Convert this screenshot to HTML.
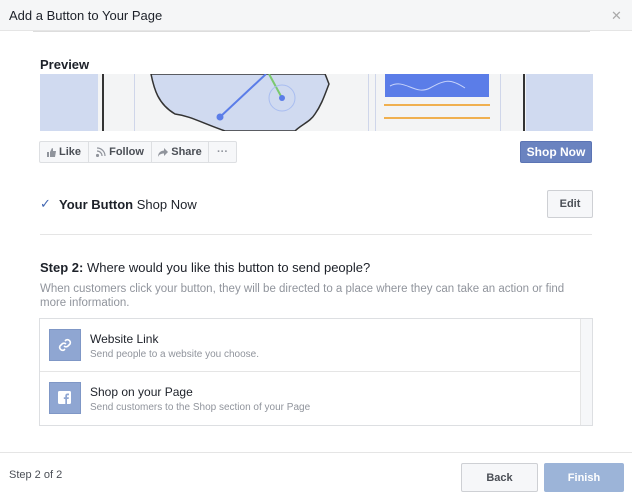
<!DOCTYPE html>
<html><head><meta charset="utf-8"><style>
*{margin:0;padding:0;box-sizing:border-box}
body{width:632px;height:500px;background:#fff;font-family:"Liberation Sans",sans-serif;position:relative;overflow:hidden;color:#1d2129}
.a{position:absolute}
.hdr{left:0;top:0;width:632px;height:31px;background:#f5f6f7;border-bottom:1px solid #e5e5e5}
.btn{border:1px solid #ced0d4;background:#f6f7f9;border-radius:2px;font-size:11px;font-weight:bold;color:#4b4f56;display:flex;align-items:center;justify-content:center}
</style></head><body>
<div class="a hdr"></div>
<div class="a" style="left:9px;top:8px;font-size:13px;color:#1d2129">Add a Button to Your Page</div>
<div class="a" style="left:611px;top:8px;font-size:13px;color:#aaa">✕</div>
<div class="a" style="left:33px;top:31px;width:557px;height:1px;background:#ddd"></div>
<div class="a" style="left:40px;top:57px;font-size:13px;font-weight:bold;color:#1d2129">Preview</div>
<svg class="a" style="left:40px;top:74px" width="553" height="57" viewBox="0 0 553 57">
<rect width="553" height="57" fill="#f3f4f5"/>
<rect width="58" height="57" fill="#d0daf0"/>
<rect x="486" width="67" height="57" fill="#d0daf0"/>
<rect x="62" width="2" height="57" fill="#333"/>
<rect x="483" width="2" height="57" fill="#333"/>
<rect x="94" width="1" height="57" fill="#cfd6ea"/>
<rect x="328" width="1" height="57" fill="#cfd6ea"/><rect x="335" width="1" height="57" fill="#cfd6ea"/>
<rect x="460" width="1" height="57" fill="#cfd6ea"/>
<path d="M111 0 C114 15 118 30 135 40 C150 42 160 48 185 57 L255 57 C262 50 270 48 275 40 C282 30 285 20 289 10 C287 5 286 2 285 0Z" fill="#d0daf0" stroke="#333" stroke-width="1.5"/>
<line x1="180" y1="43" x2="226" y2="0" stroke="#5b7de8" stroke-width="2"/>
<line x1="229" y1="0" x2="242" y2="24" stroke="#7bc96f" stroke-width="2"/>
<circle cx="242" cy="24" r="13" fill="none" stroke="#a9bdf0"/>
<circle cx="242" cy="24" r="3" fill="#5b7de8"/><circle cx="180" cy="43" r="3.5" fill="#5b7de8"/>
<rect x="345" width="104" height="23" fill="#5b7de8"/>
<path d="M350 12c15-8 25 10 40 2s20-10 35 0" stroke="#c8d4fa" fill="none"/>
<rect x="344" y="30" width="106" height="2" fill="#f0b050"/>
<rect x="344" y="43" width="106" height="2" fill="#f0b050"/>
</svg>
<div class="a" style="left:39px;top:141px;width:198px;height:22px;border:1px solid #dddfe2;border-radius:2px;background:#f6f7f9;display:flex;font-size:11px;font-weight:bold;color:#4b4f56">
<div style="width:49px;display:flex;align-items:center;justify-content:center;border-right:1px solid #dddfe2"><svg width="9" height="9" viewBox="0 0 9 9"><path d="M0 4h2v5H0zM3 4l2-4c1 0 1 1 1 2v1h3l-1 6H3z" fill="#90949c"/></svg>&nbsp;Like</div>
<div style="width:63px;display:flex;align-items:center;justify-content:center;border-right:1px solid #dddfe2"><svg width="10" height="10" viewBox="0 0 10 10" fill="none" stroke="#90949c" stroke-width="1.2"><path d="M1 1a8 8 0 0 1 8 8M1 4a5 5 0 0 1 5 5"/><circle cx="1.5" cy="8.5" r="1" fill="#90949c"/></svg>&nbsp;Follow</div>
<div style="width:57px;display:flex;align-items:center;justify-content:center;border-right:1px solid #dddfe2"><svg width="10" height="9" viewBox="0 0 10 9"><path d="M6 0l4 4-4 4V5.5C3 5.5 1 6.5 0 9c0-4 2-6 6-6.5z" fill="#90949c"/></svg>&nbsp;Share</div>
<div style="flex:1;display:flex;align-items:center;justify-content:center;color:#90949c">···</div>
</div>
<div class="a" style="left:520px;top:141px;width:72px;height:22px;background:#6a83c0;border:1px solid #5b74b4;border-radius:2px;color:#fff;font-size:12px;font-weight:bold;display:flex;align-items:center;justify-content:center">Shop Now</div>
<div class="a" style="left:40px;top:196px;font-size:13px;color:#4267b2">✓</div>
<div class="a" style="left:59px;top:197px;font-size:13px"><b>Your Button</b> Shop Now</div>
<div class="a btn" style="left:547px;top:190px;width:46px;height:28px">Edit</div>
<div class="a" style="left:40px;top:234px;width:552px;height:1px;background:#e5e5e5"></div>
<div class="a" style="left:40px;top:260px;font-size:13px"><b>Step 2:</b> Where would you like this button to send people?</div>
<div class="a" style="left:40px;top:282px;width:550px;font-size:11.5px;line-height:14px;color:#90949c">When customers click your button, they will be directed to a place where they can take an action or find more information.</div>
<div class="a" style="left:39px;top:318px;width:554px;height:108px;border:1px solid #dddfe2"></div>
<div class="a" style="left:580px;top:319px;width:12px;height:106px;background:#f6f7f9;border-left:1px solid #e5e5e5"></div>
<div class="a" style="left:40px;top:371px;width:540px;height:1px;background:#e5e5e5"></div>
<div class="a" style="left:49px;top:329px;width:32px;height:32px;background:#8fa6d2;border:1px solid #7f97c6"></div>
<svg class="a" style="left:57px;top:337px" width="16" height="16" viewBox="0 0 16 16" fill="none" stroke="#fff" stroke-width="1.6"><path d="M7 9a3 3 0 0 0 4 0l2-2a3 3 0 0 0-4-4l-1 1M9 7a3 3 0 0 0-4 0l-2 2a3 3 0 0 0 4 4l1-1"/></svg>
<div class="a" style="left:90px;top:332px;font-size:12px">Website Link</div>
<div class="a" style="left:90px;top:349px;font-size:10px;color:#90949c">Send people to a website you choose.</div>
<div class="a" style="left:49px;top:382px;width:32px;height:32px;background:#8fa6d2;border:1px solid #7f97c6"></div>
<svg class="a" style="left:58px;top:391px" width="13" height="13" viewBox="0 0 13 13"><rect width="13" height="13" rx="1.5" fill="#fff"/><path d="M9 13V8h1.6l.3-1.8H9V5c0-.5.2-.8.8-.8H11V2.6C10.7 2.5 10 2.5 9.5 2.5 8.2 2.5 7.3 3.3 7.3 4.7v1.5H5.8V8h1.5v5z" fill="#8fa6d2"/></svg>
<div class="a" style="left:90px;top:385px;font-size:12px">Shop on your Page</div>
<div class="a" style="left:90px;top:402px;font-size:10px;color:#90949c">Send customers to the Shop section of your Page</div>
<div class="a" style="left:0;top:452px;width:632px;height:1px;background:#e5e5e5"></div>
<div class="a" style="left:9px;top:469px;font-size:11px;color:#4b4f56">Step 2 of 2</div>
<div class="a btn" style="left:461px;top:463px;width:77px;height:29px">Back</div>
<div class="a" style="left:544px;top:463px;width:80px;height:29px;background:#9cb4d8;border:1px solid #9cb4d8;border-radius:2px;color:#fff;font-size:11px;font-weight:bold;display:flex;align-items:center;justify-content:center">Finish</div>
</body></html>
